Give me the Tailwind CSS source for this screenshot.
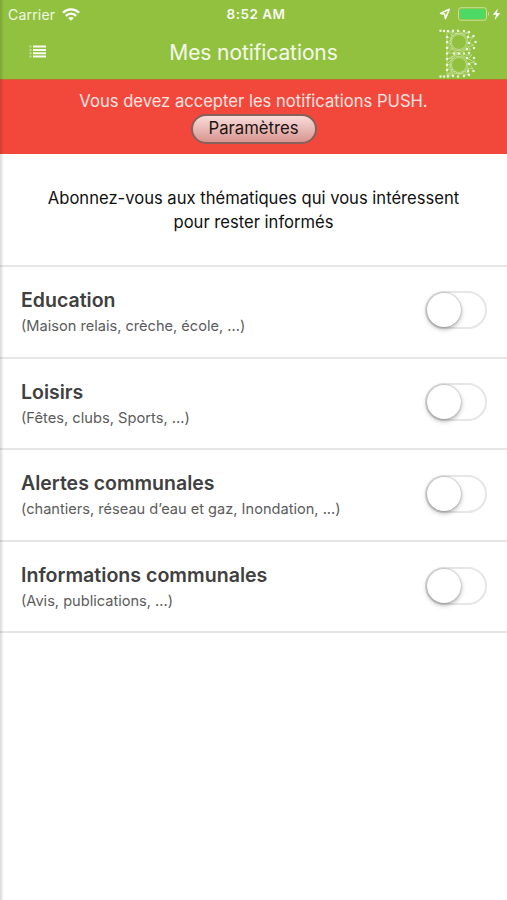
<!DOCTYPE html>
<html lang="fr">
<head>
<meta charset="utf-8">
<title>Mes notifications</title>
<script src="https://cdn.jsdelivr.net/npm/@tailwindcss/browser@4"></script>
</head>
<body class="bg-white font-['Inter','Liberation_Sans',sans-serif]">
<div class="relative flex h-[900px] w-[507px] flex-col overflow-hidden bg-white">
  <header class="h-[79px] shrink-0 bg-[#92c140] text-white">
    <div class="grid h-[27px] grid-cols-[1fr_auto_1fr] items-center pl-2 pr-[5px]">
      <div class="flex items-center gap-[7px]">
        <span class="text-[14px] leading-[27px] tracking-[0.2px] text-white/85">Carrier</span>
        <svg class="h-[13px] w-[18px]" viewBox="0 0 18 13" fill="none" stroke="#fff" stroke-width="2.3"><path d="M1 4.8C5.5.3 12.500.3 17 4.800M3.800 7.800c3-2.900 7.400-2.900 10.400 0"/><path d="M9 12.800 6.200 10c1.700-1.500 3.900-1.500 5.600 0Z" fill="#fff" stroke="none"/></svg>
      </div>
      <span class="pl-[2px] pt-px text-[13.500px] font-semibold leading-[27px] tracking-[0.5px] text-white/95">8:52 AM</span>
      <div class="flex items-center justify-end">
        <svg class="-mr-px h-[16px] w-[64px]" viewBox="0 0 64 16" fill="none"><path d="M1.500 7.400 10.300 3.200 6.400 12.600 5.700 8.100Z" stroke="#fff" stroke-width="1.500" stroke-linejoin="round"/><rect x="19.500" y="1.700" width="28" height="12.600" rx="2.500" stroke="#c5df98" stroke-width="1"/><rect x="21" y="3" width="25" height="10" rx="1" fill="#4cd964"/><path d="M49 6v4c1.500-.6 1.500-3.400 0-4Z" fill="#c5df98"/><path d="m59 2.500-5.200 6.300h3.300L55.700 14l5.700-7h-3.500Z" fill="#fff"/></svg>
      </div>
    </div>
    <div class="grid h-[52px] grid-cols-[1fr_auto_1fr] items-center pl-[29px] pr-[29px]">
      <svg class="-mt-[3px] h-[13px] w-[17px]" viewBox="0 0 17 13" fill="#fff" opacity=".92"><path d="M4 .4h13v2H4zM4 3.900h13v2H4zM4 7.200h13v2H4zM4 10.500h13v2H4z"/><path opacity=".5" d="M.5.4h2v2h-2zM.5 3.900h2v2h-2zM.5 7.200h2v2h-2zM.5 10.500h2v2h-2z"/></svg>
      <h1 class="text-[21px] leading-[50px] tracking-[-0.1px] text-white/90">Mes notifications</h1>
      <svg class="h-[50px] w-[40px] justify-self-end" viewBox="0 0 40 50">
        <g fill="none" stroke="#e9f4d6" stroke-width=".8" opacity=".6"><circle cx="21" cy="14" r="7.500"/><circle cx="21" cy="37" r="7.500"/><circle cx="21" cy="14" r="8.800"/><circle cx="21" cy="37" r="8.800"/><path d="M9 3l6 5 6-5 5 4 5-3-1 6 5-1-4 6 5 2-6 2 3 3-6 0M9 3v45M9 9l5 2-5 4 4 1-4 4 6 0-6 5 12 0-12 6 6-1-6 6 4 1-4 5 6-1-6 6 8-4 4 4 5-4 5 3-1-6 5 1-4-6 6-1-7-3 4-4-7 0M13 21l16 9M29 21l-16 9M9 3l11 3 11-2M9 48l11-3 11 2M15 3l-2 7M15 48l-2-7"/></g>
        <g fill="none" stroke="#fff" stroke-width="2.500" stroke-linecap="round" opacity=".8"><path d="M2.500 2.700h0M6 3h0M10 3h0M15 2.700h0M20 2.700h0M26 3h0M31 4h0M35.500 8h0M37.500 14h0M36 20h0M31 25h0M36 30h0M37.500 36h0M35.500 43h0M31 47h0M26 48h0M20 48.500h0M15 48h0M10 48.500h0M6 48.500h0M2.500 48.500h0M9 9h0M9 14h0M9 20h0M9 25.500h0M9 31h0M9 37h0M9 42h0M30 9h0M31 15h0M29 21h0M29 30h0M31 36h0M30 43h0M21 25.500h0M16 25.500h0M26 25.500h0"/></g>
      </svg>
    </div>
  </header>
  <section class="flex h-[75px] shrink-0 flex-col items-center border-t border-[#c8692f] bg-[#f2483b]">
    <p class="mt-[9px] text-[16.600px] leading-6 text-white/85">Vous devez accepter les notifications PUSH.</p>
    <button class="mt-px flex h-[30px] w-[126px] items-center justify-center rounded-full border-2 border-[#87605b] bg-linear-to-b from-[#f7dddb] via-[#e8b9b6] to-[#d8948f] pb-[2px] text-[16.700px] leading-none text-[#201313]">Paramètres</button>
  </section>
  <p class="flex h-[111px] shrink-0 items-center justify-center pt-px text-center text-[16.600px] leading-[24.500px] text-[#111]"><span>Abonnez-vous aux thématiques qui vous intéressent<br>pour rester informés</span></p>
  <main>
    <div class="flex h-[91.700px] items-center justify-between border-t-2 border-[#e6e6e6] pl-[21px] pr-[20px]">
      <div class="mt-[3px]"><h2 class="text-[19.500px] font-semibold leading-[26px] text-[#404040]">Education</h2><p class="text-[14.600px] leading-[26px] text-[#5b5b5b]">(Maison relais, crèche, école, ...)</p></div>
      <div class="-mt-[3px] h-[38px] w-[62px] rounded-full border-2 border-[#e6e6e6]"><div class="h-[34px] w-[34px] rounded-full bg-white shadow-[0_2px_5px_rgba(0,0,0,0.32),0_0_2px_rgba(0,0,0,0.3)]"></div></div>
    </div>
    <div class="flex h-[91.700px] items-center justify-between border-t-2 border-[#e6e6e6] pl-[21px] pr-[20px]">
      <div class="mt-[3px]"><h2 class="text-[19.500px] font-semibold leading-[26px] text-[#404040]">Loisirs</h2><p class="text-[14.700px] leading-[26px] text-[#5b5b5b]">(Fêtes, clubs, Sports, ...)</p></div>
      <div class="-mt-[3px] h-[38px] w-[62px] rounded-full border-2 border-[#e6e6e6]"><div class="h-[34px] w-[34px] rounded-full bg-white shadow-[0_2px_5px_rgba(0,0,0,0.32),0_0_2px_rgba(0,0,0,0.3)]"></div></div>
    </div>
    <div class="flex h-[91.700px] items-center justify-between border-t-2 border-[#e6e6e6] pl-[21px] pr-[20px]">
      <div class="mt-px"><h2 class="text-[19.500px] font-semibold leading-[26px] text-[#404040]">Alertes communales</h2><p class="text-[14.600px] leading-[26px] text-[#5b5b5b]">(chantiers, réseau d’eau et gaz, Inondation, ...)</p></div>
      <div class="-mt-[3px] h-[38px] w-[62px] rounded-full border-2 border-[#e6e6e6]"><div class="h-[34px] w-[34px] rounded-full bg-white shadow-[0_2px_5px_rgba(0,0,0,0.32),0_0_2px_rgba(0,0,0,0.3)]"></div></div>
    </div>
    <div class="flex h-[93px] items-center justify-between border-y-2 border-[#e6e6e6] pl-[21px] pr-[20px]">
      <div class="mt-[3px]"><h2 class="text-[19.600px] font-semibold leading-[26px] text-[#404040]">Informations communales</h2><p class="text-[14.600px] leading-[26px] text-[#5b5b5b]">(Avis, publications, ...)</p></div>
      <div class="-mt-px h-[38px] w-[62px] rounded-full border-2 border-[#e6e6e6]"><div class="h-[34px] w-[34px] rounded-full bg-white shadow-[0_2px_5px_rgba(0,0,0,0.32),0_0_2px_rgba(0,0,0,0.3)]"></div></div>
    </div>
  </main>
  <div class="pointer-events-none absolute inset-y-0 left-0 w-[4px] bg-linear-to-r from-black/15 to-transparent"></div>
</div>
</body>
</html>
